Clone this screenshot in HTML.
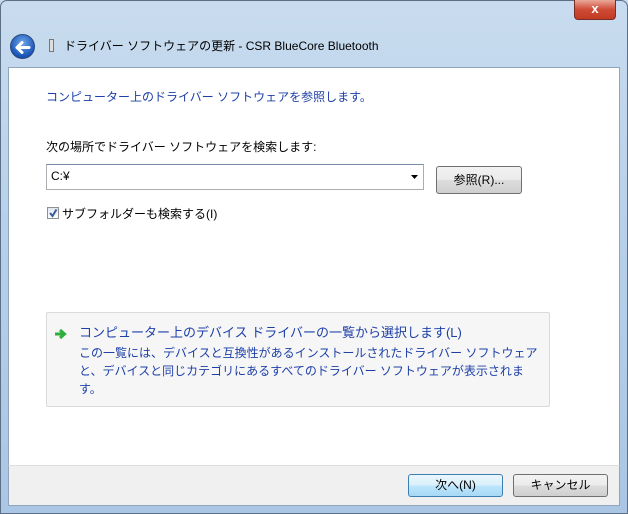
<!DOCTYPE html>
<html><head><meta charset="utf-8"><style>
*{margin:0;padding:0;box-sizing:border-box}
body{width:628px;height:514px;overflow:hidden;font-family:"Liberation Sans","Noto Sans CJK JP",sans-serif;font-size:12px;position:relative;background:linear-gradient(180deg,#c9dcef 0%,#b9d1ea 40%,#aac6e4 100%);}
.frame{position:absolute;inset:0;border:1px solid #5b6f86;border-radius:7px 7px 0 0;}
.close{position:absolute;left:574px;top:0;width:42px;height:20px;border:1px solid #7a2e2a;border-top:none;border-radius:0 0 4px 4px;background:linear-gradient(#e9a99a,#cf4b36 50%,#c23a22);color:#fff;font-weight:bold;text-align:center;line-height:18px;font-size:13px}
.back{position:absolute;left:10px;top:34px;width:25px;height:25px;border-radius:50%;background:radial-gradient(circle at 50% 35%,#6fa8e8,#1a54b8 70%,#123a80);border:1px solid #2a4b7c}
.title{position:absolute;left:64px;top:37px;font-size:12px;color:#000}
.content{position:absolute;left:8px;top:67px;width:612px;height:398px;background:#fff;border:1px solid #8fa5bd;border-bottom:none}
.footer{position:absolute;left:8px;top:465px;width:612px;height:41px;background:#f0f0f0;border:1px solid #8fa5bd;border-top:1px solid #dfdfdf}
.t{position:absolute;white-space:nowrap}
.blue{color:#1c3fa8}
.combo{position:absolute;left:46px;top:164px;width:378px;height:26px;border:1px solid #abadb3;border-top-color:#7a8eab;background:#fff}
.btn{position:absolute;height:23px;border:1px solid #707070;border-radius:3px;background:linear-gradient(#f2f2f2 0%,#ebebeb 49%,#dddddd 50%,#cfcfcf 100%);text-align:center;line-height:21px;font-size:12px}
.link{position:absolute;left:46px;top:312px;width:504px;height:95px;background:#f6f6f6;border:1px solid #dadada;border-radius:2px}
</style></head><body>
<div class="frame"></div>
<div class="close">x</div>
<div class="back"><svg width="25" height="25" viewBox="0 0 25 25"><path d="M6 12.5h12M6 12.5l5-5M6 12.5l5 5" stroke="#fff" stroke-width="3" fill="none" stroke-linecap="round"/></svg></div>
<div style="position:absolute;left:49px;top:39px;width:5px;height:13px;border:1px solid #777;background:#ddd"></div>
<div class="title">ドライバー ソフトウェアの更新 - CSR BlueCore Bluetooth</div>
<div class="content"></div>
<div class="footer"></div>
<div class="t blue" style="left:46px;top:88px">コンピューター上のドライバー ソフトウェアを参照します。</div>
<div class="t" style="left:46px;top:138px">次の場所でドライバー ソフトウェアを検索します:</div>
<div class="combo"><span class="t" style="left:4px;top:4px">C:¥</span><svg style="position:absolute;left:364px;top:10px" width="8" height="5"><path d="M0 0h7L3.5 4z" fill="#000"/></svg></div>
<div class="btn" style="left:436px;top:166px;width:86px;height:28px;line-height:26px">参照(R)...</div>
<div style="position:absolute;left:47px;top:207px;width:12px;height:12px;border:1px solid #8f8f8f;background:linear-gradient(#e0e6f0,#fff)"><svg width="10" height="10" style="position:absolute;left:0;top:0"><path d="M2 5l2.5 3L8.5 1.5" stroke="#3a5a9a" stroke-width="2" fill="none"/></svg></div>
<div class="t" style="left:62px;top:205px">サブフォルダーも検索する(I)</div>
<div class="link"></div>
<svg style="position:absolute;left:54px;top:327px" width="14" height="14" viewBox="0 0 14 14"><path d="M1 7h8M6 3l4.5 4L6 11" stroke="#2eae3a" stroke-width="3" fill="none"/></svg>
<div class="t blue" style="left:79px;top:322px;font-size:13px">コンピューター上のデバイス ドライバーの一覧から選択します(L)</div>
<div class="t blue" style="left:79px;top:344px">この一覧には、デバイスと互換性があるインストールされたドライバー ソフトウェア</div>
<div class="t blue" style="left:79px;top:362px">と、デバイスと同じカテゴリにあるすべてのドライバー ソフトウェアが表示されま</div>
<div class="t blue" style="left:79px;top:380px">す。</div>
<div class="btn" style="left:408px;top:474px;width:95px;border-color:#3c7fb1;background:linear-gradient(#eaf6fd,#d9f0fc 49%,#bee6fd 50%,#a7d9f5)">次へ(N)</div>
<div class="btn" style="left:513px;top:474px;width:95px">キャンセル</div>
</body></html>
